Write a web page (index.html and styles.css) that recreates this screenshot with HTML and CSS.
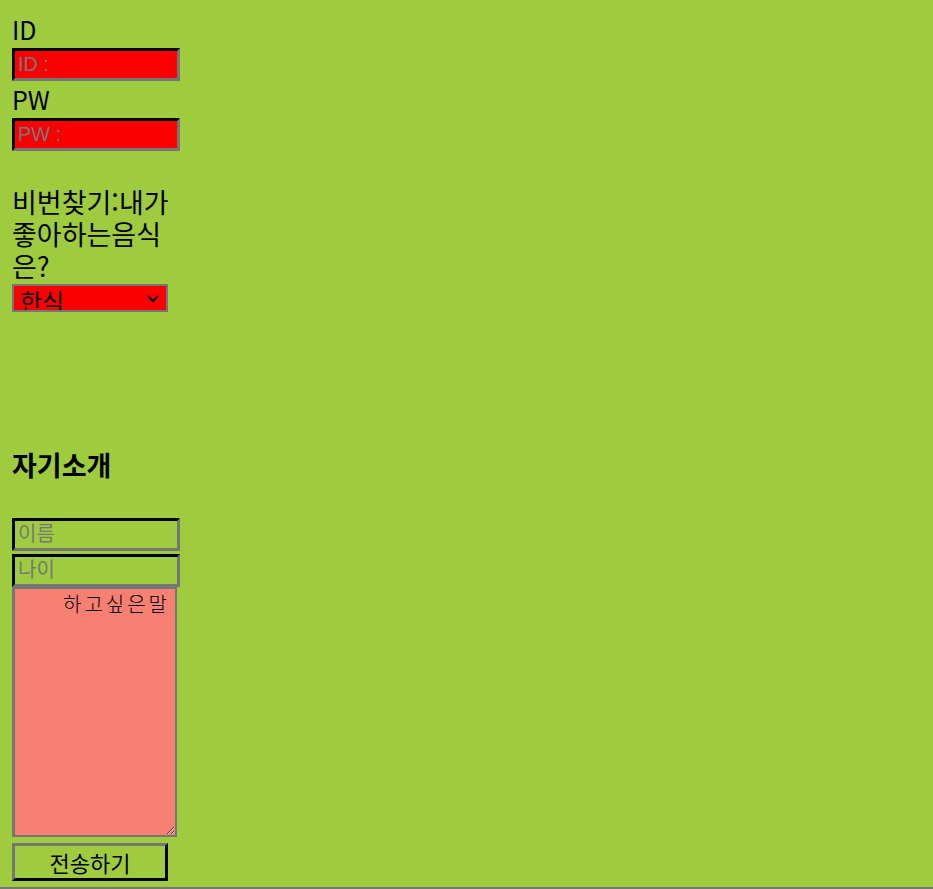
FILE: index.html
```html
<!DOCTYPE html>
<html lang="ko">
<head>
<meta charset="utf-8">
<title>폼</title>
<link rel="stylesheet" href="styles.css">
</head>
<body>
<div class="page">
  <form class="form">
    <label class="lbl">ID</label>
    <input class="field field-red" type="text" placeholder="ID :">
    <label class="lbl">PW</label>
    <input class="field field-red" type="password" placeholder="PW :">
    <p class="question">비번찾기:내가좋아하는음식은?</p>
    <div class="pick-wrap">
      <select class="pick">
        <option>한식</option>
        <option>중식</option>
        <option>일식</option>
        <option>양식</option>
      </select>
      <svg class="chev" width="12" height="8" viewBox="0 0 12 8" aria-hidden="true"><path d="M1 1 L6 6 L11 1" fill="none" stroke="#000" stroke-width="2"/></svg>
    </div>
    <h3 class="title">자기소개</h3>
    <input class="field field-clear" type="text" placeholder="이름">
    <input class="field field-clear" type="text" placeholder="나이">
    <textarea class="memo">하고싶은말</textarea>
    <button class="send" type="button">전송하기</button>
  </form>
  <div class="bottom-line"></div>
</div>
</body>
</html>
```

FILE: styles.css
```css
html, body {
  margin: 0;
  padding: 0;
  background: #9fcc3f;
}
body {
  font-family: "Noto Sans CJK KR", "Noto Sans", sans-serif;
  color: #000;
  height: 889px;
  overflow: hidden;
}
.page {
  display: flex;
  flex-direction: column;
  height: 889px;
}
.form {
  display: flex;
  flex-direction: column;
  align-items: flex-start;
  padding: 11px 0 0 12px;
  width: 180px;
  flex: 1;
}
.lbl {
  display: block;
  font-size: 25px;
  line-height: 37px;
  height: 37px;
}
.field {
  box-sizing: border-box;
  width: 168px;
  height: 33px;
  margin: 0;
  border: 3px inset;
  border-color: #222 #767676 #767676 #222;
  padding: 0 3px;
  font-family: "Liberation Sans", "Noto Sans CJK KR", sans-serif;
  font-size: 20px;
  outline: none;
}
.field::placeholder {
  color: #777;
}
.field-red {
  background: #fa0000;
}
.field-clear {
  background: transparent;
}
.field-clear + .field-clear {
  margin-top: 3px;
}
.question {
  margin: 35px 0 2px 0;
  font-size: 27px;
  line-height: 32px;
  width: 170px;
}
.pick-wrap {
  position: relative;
  width: 156px;
  height: 28px;
}
.pick {
  -webkit-appearance: none;
  appearance: none;
  box-sizing: border-box;
  width: 156px;
  height: 28px;
  margin: 0;
  border: 2px solid #767676;
  border-radius: 0;
  background: #fa0000;
  color: #000;
  font-family: "Noto Sans CJK KR", "Noto Sans", sans-serif;
  font-weight: 400;
  font-size: 24px;
  padding: 0 6px;
  line-height: 30px;
  overflow: hidden;
}
.chev {
  position: absolute;
  right: 9px;
  top: 11px;
  pointer-events: none;
}
.title {
  margin: 138px 0 0 0;
  font-size: 27px;
  font-weight: bold;
  line-height: 30px;
  height: 30px;
}
.title + .field {
  margin-top: 38px;
}
.memo {
  box-sizing: border-box;
  width: 165px;
  height: 250px;
  margin: 0;
  border: 2px solid #767676;
  border-left-width: 3px;
  background: #f78072;
  color: #000;
  font-family: "Noto Sans CJK KR", "Noto Sans", sans-serif;
  font-weight: 300;
  font-size: 20px;
  letter-spacing: 3px;
  line-height: 26px;
  padding: 2px 5px;
  text-align: right;
  outline: none;
}
.send {
  box-sizing: border-box;
  width: 156px;
  height: 38px;
  margin: 6px 0 0 0;
  border: 3px outset;
  border-color: #767676 #222 #222 #767676;
  background: transparent;
  color: #000;
  font-family: "Noto Sans CJK KR", "Noto Sans", sans-serif;
  font-size: 22px;
  padding: 0;
  line-height: 30px;
}
.bottom-line {
  height: 2px;
  background: #767676;
  width: 100%;
}
```
